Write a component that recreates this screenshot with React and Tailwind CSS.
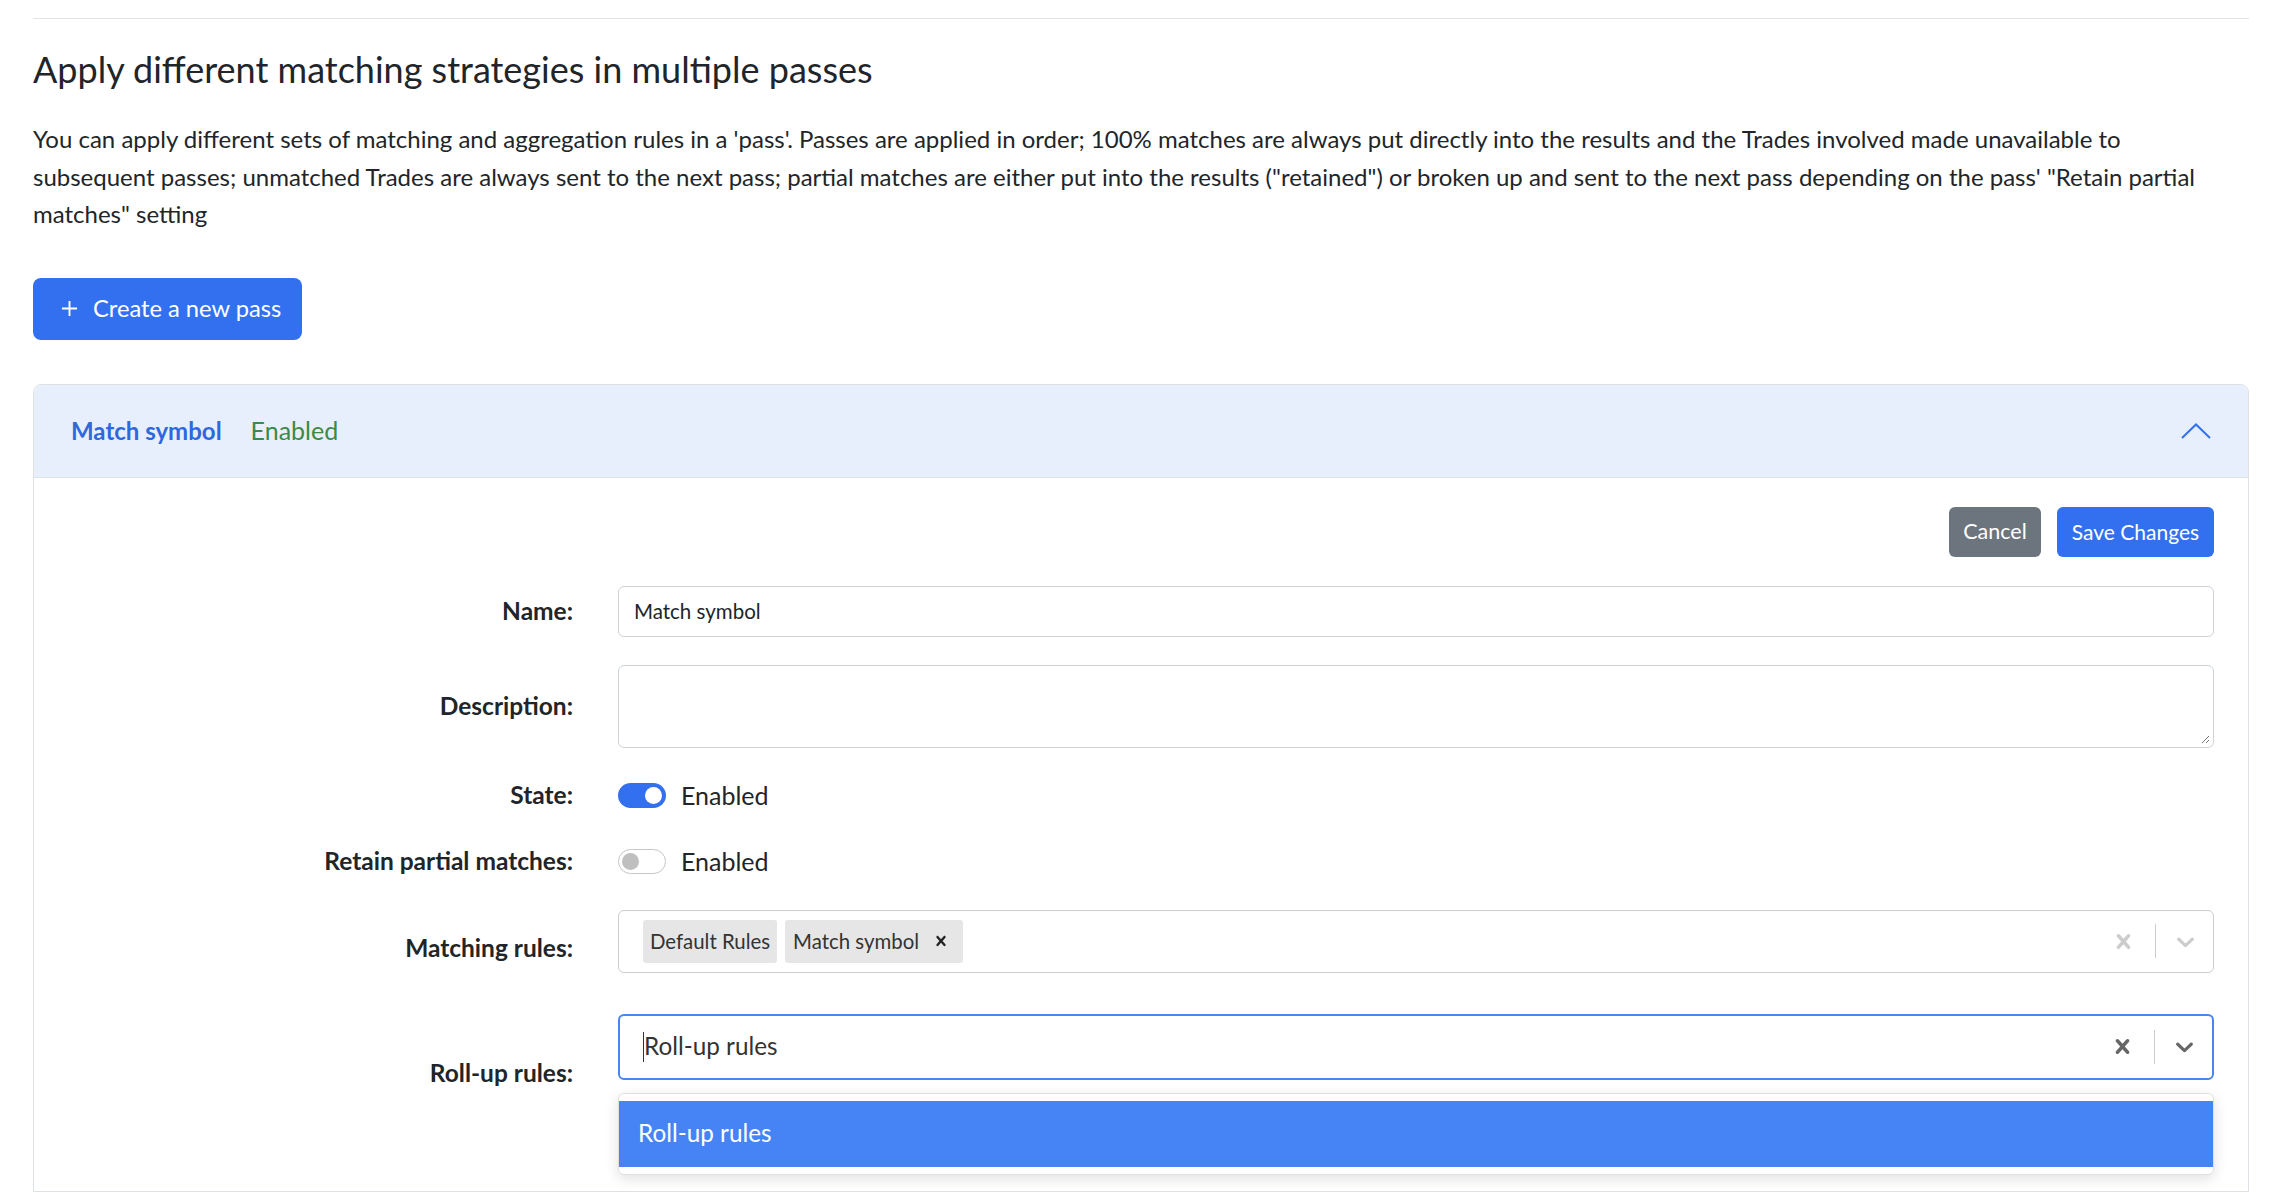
import React from 'react';

function CrossIcon({ className }) {
  return (
    <svg viewBox="0 0 20 20" className={className} fill="currentColor">
      <path d="M14.348 14.849c-0.469 0.469-1.229 0.469-1.697 0l-2.651-3.030-2.651 3.029c-0.469 0.469-1.229 0.469-1.697 0-0.469-0.469-0.469-1.229 0-1.697l2.758-3.15-2.759-3.152c-0.469-0.469-0.469-1.228 0-1.697s1.228-0.469 1.697 0l2.652 3.031 2.651-3.031c0.469-0.469 1.228-0.469 1.697 0s0.469 1.229 0 1.697l-2.758 3.152 2.758 3.15c0.469 0.469 0.469 1.229 0 1.698z" />
    </svg>
  );
}

function ChevronIcon({ className }) {
  return (
    <svg viewBox="0 0 20 20" className={className} fill="currentColor">
      <path d="M4.516 7.548c0.436-0.446 1.043-0.481 1.576 0l3.908 3.747 3.908-3.747c0.533-0.481 1.141-0.446 1.574 0 0.436 0.445 0.408 1.197 0 1.615-0.406 0.418-4.695 4.502-4.695 4.502-0.217 0.223-0.502 0.335-0.787 0.335s-0.57-0.112-0.789-0.335c0 0-4.287-4.084-4.695-4.502s-0.436-1.17 0-1.615z" />
    </svg>
  );
}

function Toggle({ on }) {
  return on ? (
    <div className="w-[48px] h-[25px] rounded-full bg-[#3370f0] flex items-center justify-end px-[4px]">
      <div className="w-[17px] h-[17px] rounded-full bg-white" />
    </div>
  ) : (
    <div className="w-[48px] h-[25px] rounded-full bg-white border border-[#c6c6c6] flex items-center justify-start px-[3px]">
      <div className="w-[17px] h-[17px] rounded-full bg-[#bfbfbf]" />
    </div>
  );
}

function Row({ label, children, className = '' }) {
  return (
    <div className={`flex items-center ${className}`}>
      <div className="w-[539px] shrink-0 text-right text-[24.5px] font-bold text-[#212529] leading-none">{label}</div>
      <div className="ml-[45px] flex-1 self-stretch flex flex-col justify-start">{children}</div>
    </div>
  );
}

function Indicators({ color }) {
  return (
    <div className={`ml-auto flex items-center h-full ${color}`}>
      <CrossIcon className="w-[29px] h-[29px]" />
      <div className="ml-[17px] mr-[15px] w-px h-[34px] bg-[#cccccc]" />
      <ChevronIcon className="w-[29px] h-[29px]" />
    </div>
  );
}

export default function App() {
  return (
    <div className="min-h-screen bg-white px-[33px] pr-[35px] pt-[18px] font-['Lato','Noto_Sans',sans-serif] text-[#212529]">
      <div className="border-t border-[#e3e3e3]" />

      <h2 className="mt-[30px] text-[36px] leading-[40px] font-normal">
        Apply different matching strategies in multiple passes
      </h2>

      <p className="mt-[31px] text-[24px] leading-[37.5px]">
        You can apply different sets of matching and aggregation rules in a 'pass'. Passes are applied in order; 100% matches are always put directly into the results and the Trades involved made unavailable to
        <br />
        subsequent passes; unmatched Trades are always sent to the next pass; partial matches are either put into the results ("retained") or broken up and sent to the next pass depending on the pass' "Retain partial
        <br />
        matches" setting
      </p>

      <button className="mt-[45px] h-[62px] w-[269px] rounded-[8px] bg-[#3370f0] text-white text-[23.7px] flex items-center pl-[28px] gap-[15px]">
        <svg viewBox="0 0 18 18" className="w-[17px] h-[17px]" fill="none" stroke="currentColor" strokeWidth="2">
          <path d="M9 1v16M1 9h16" />
        </svg>
        Create a new pass
      </button>

      <div className="mt-[44px] border border-[#dee2e6] rounded-t-[8px] border-b">
        <div className="h-[93px] bg-[#e8effc] border-b border-[#dee2e6] rounded-t-[8px] flex items-center pl-[37px] pr-[37px]">
          <span className="text-[24px] font-bold text-[#2f68dc]">Match symbol</span>
          <span className="ml-[29px] text-[25px] text-[#3a8a46]">Enabled</span>
          <svg viewBox="0 0 30 16" className="ml-auto w-[30px] h-[16px]" fill="none" stroke="#3370f0" strokeWidth="2">
            <path d="M1 15L15 1.5L29 15" />
          </svg>
        </div>

        <div className="pt-[29px] pr-[34px] pb-[57px]">
          <div className="flex justify-end gap-[16px]">
            <button className="h-[50px] w-[92px] rounded-[6px] bg-[#6c757d] text-white text-[21.5px]">Cancel</button>
            <button className="h-[50px] w-[157px] rounded-[6px] bg-[#3370f0] text-white text-[21px]">Save Changes</button>
          </div>

          <Row label="Name:" className="mt-[29px]">
            <div className="h-[51px] border border-[#ced4da] rounded-[6px] flex items-center pl-[15px] text-[20.5px]">Match symbol</div>
          </Row>

          <Row label="Description:" className="mt-[28px]">
            <div className="relative h-[83px] border border-[#ced4da] rounded-[6px]">
              <svg viewBox="0 0 10 10" className="absolute right-[3px] bottom-[3px] w-[10px] h-[10px]" stroke="#777" strokeWidth="1">
                <path d="M9 2L2 9M9 6L6 9" />
              </svg>
            </div>
          </Row>

          <Row label="State:" className="mt-[30px] h-[36px]">
            <div className="h-full flex items-center gap-[15px]">
              <Toggle on />
              <span className="text-[25px]">Enabled</span>
            </div>
          </Row>

          <Row label="Retain partial matches:" className="mt-[30px] h-[36px]">
            <div className="h-full flex items-center gap-[15px]">
              <Toggle />
              <span className="text-[25px]">Enabled</span>
            </div>
          </Row>

          <Row label="Matching rules:" className="mt-[30px] h-[78px]">
            <div className="h-[63px] border border-[#cccccc] rounded-[6px] flex items-center pl-[24px] pr-[13px]">
              <div className="h-[43px] rounded-[3px] bg-[#e6e6e6] flex items-center px-[7px] text-[20.4px] text-[#333]">Default Rules</div>
              <div className="ml-[8px] h-[43px] rounded-[3px] bg-[#e6e6e6] flex items-center pl-[8px] text-[20.4px] text-[#333]">
                Match symbol
                <span className="w-[44px] h-full flex items-center justify-center">
                  <CrossIcon className="w-[20px] h-[20px] text-[#222]" />
                </span>
              </div>
              <Indicators color="text-[#cccccc]" />
            </div>
          </Row>

          <Row label="Roll-up rules:" className="mt-[26px] h-[120px]">
            <div className="relative">
              <div className="h-[66px] border-2 border-[#4a84f0] rounded-[6px] flex items-center pl-[23px] pr-[13px]">
                <span className="w-px h-[30px] bg-[#333]" />
                <span className="text-[24.3px] text-[#333]">Roll-up rules</span>
                <Indicators color="text-[#666666]" />
              </div>
              <div className="absolute left-0 right-0 top-[79px] bg-white rounded-[6px] border border-[#e0e0e0] shadow-[0_4px_14px_rgba(0,0,0,0.12)] py-[7px]">
                <div className="h-[66px] bg-[#4684f5] flex items-center pl-[19px] text-[24.3px] text-white">Roll-up rules</div>
              </div>
            </div>
          </Row>
        </div>
      </div>
    </div>
  );
}
